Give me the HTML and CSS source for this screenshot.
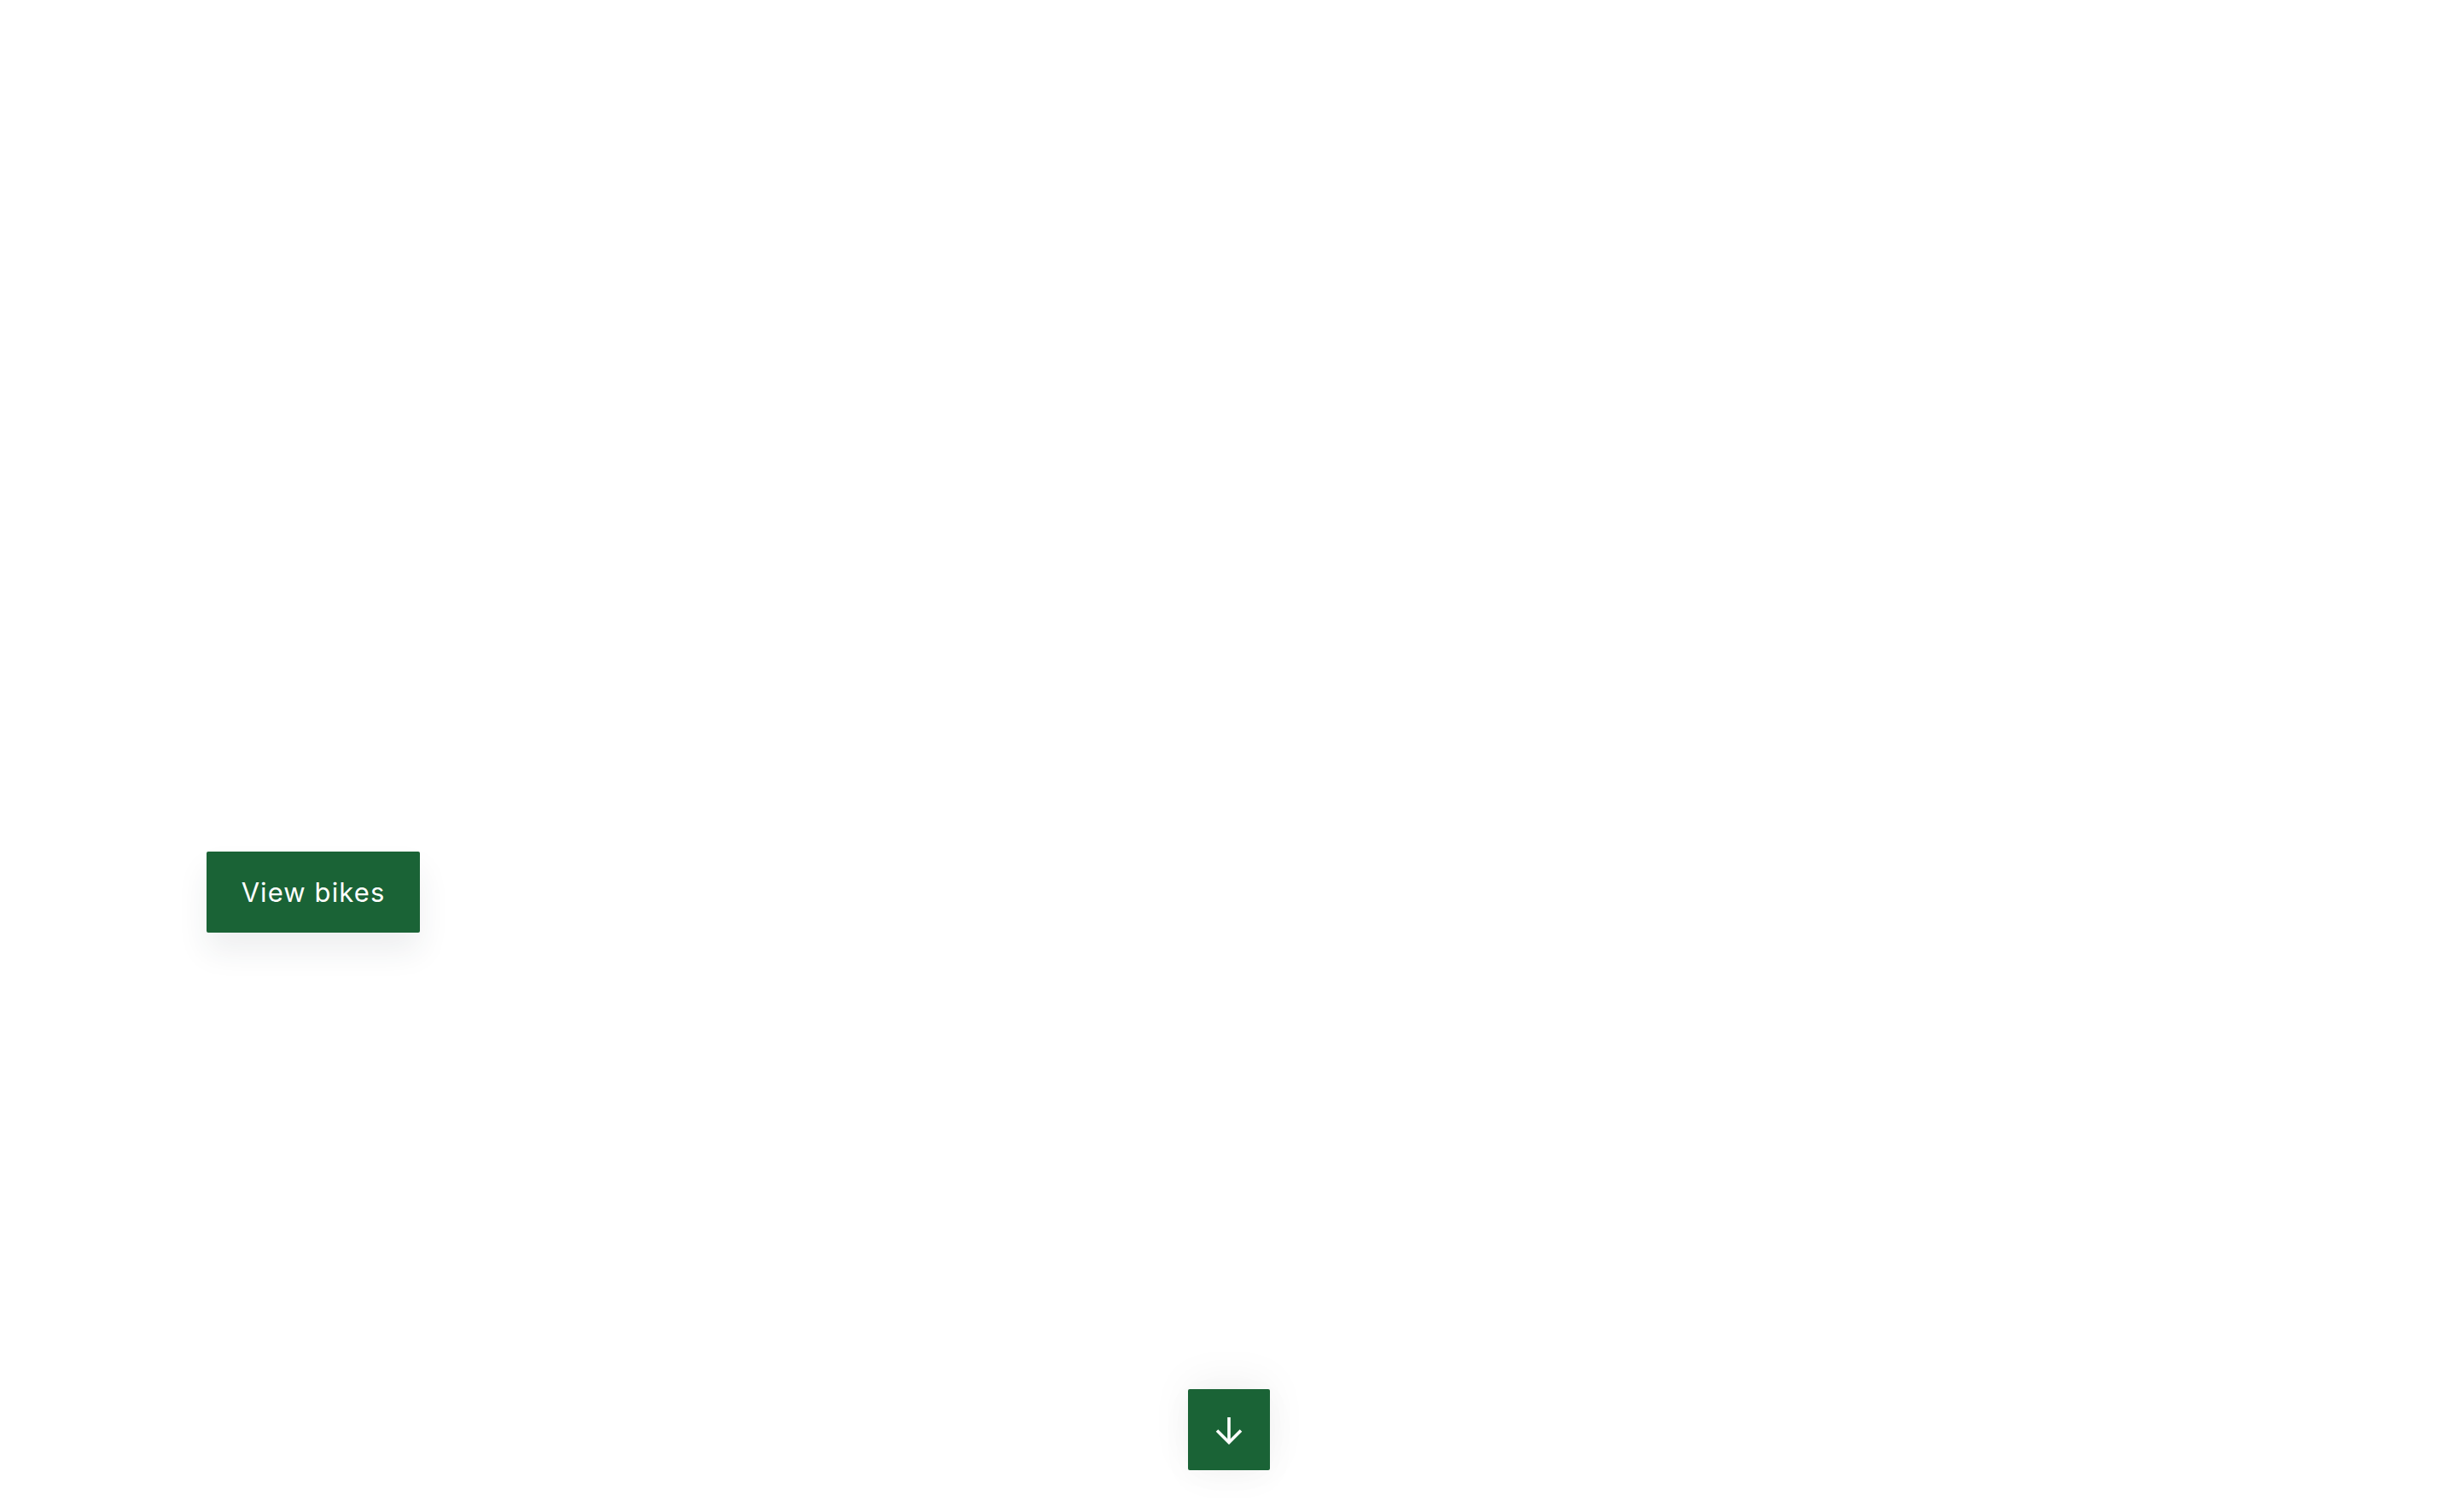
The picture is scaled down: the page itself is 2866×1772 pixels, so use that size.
FILE: index.html
```html
<!DOCTYPE html>
<html>
<head>
<meta charset="utf-8">
<link rel="stylesheet" href="styles.css">
</head>
<body>
<main class="hero">
  <div class="hero-content">
    <a class="btn-primary" href="#">View bikes</a>
  </div>
  <div class="scroll-row">
    <a class="btn-scroll" href="#" aria-label="Scroll down">
      <svg width="34" height="34" viewBox="0 0 34 34" fill="none" stroke="#ffffff" stroke-width="3.6" stroke-linecap="butt" stroke-linejoin="miter">
        <path d="M17 2 V31"/>
        <path d="M3 17.5 L17 31.5 L31 17.5"/>
      </svg>
    </a>
  </div>
</main>
</body>
</html>
```
FILE: styles.css
```css
html, body {
  margin: 0;
  padding: 0;
  background: #ffffff;
}
.hero {
  height: 1772px;
  display: flex;
  flex-direction: column;
  box-sizing: border-box;
  overflow: hidden;
}
.hero-content {
  padding-top: 998px;
  padding-left: 242px;
  display: flex;
}
.btn-primary {
  display: flex;
  align-items: center;
  justify-content: center;
  width: 250px;
  height: 95px;
  background: #1a6336;
  color: #ffffff;
  border-radius: 2px;
  text-decoration: none;
  font-family: "Inter", "Open Sans", sans-serif;
  font-size: 31px;
  font-weight: 400;
  letter-spacing: 1.1px;
  box-shadow: 0 22px 36px rgba(40, 50, 70, 0.08);
}
.scroll-row {
  margin-top: auto;
  padding-bottom: 49px;
  padding-left: 1392px;
  display: flex;
}
.btn-scroll {
  width: 96px;
  height: 95px;
  background: #1a6336;
  border-radius: 2px;
  display: flex;
  align-items: center;
  justify-content: center;
  box-shadow: 0 -10px 50px rgba(0, 0, 0, 0.05), 0 10px 40px rgba(0, 0, 0, 0.03);
}
.btn-scroll svg {
  display: block;
}
```
